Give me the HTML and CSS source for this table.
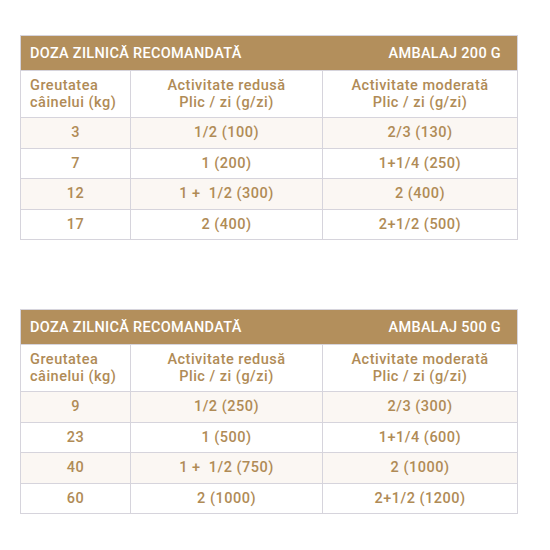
FILE: index.html
```html
<!DOCTYPE html>
<html lang="ro">
<head>
<meta charset="utf-8">
<link rel="stylesheet" href="styles.css">
</head>
<body>
<div class="page">
  <table class="dose">
    <colgroup><col class="c1"><col class="c2"><col class="c3"></colgroup>
    <thead>
      <tr class="title"><th colspan="3"><div class="title-in"><span>DOZA ZILNICĂ RECOMANDATĂ</span><span>AMBALAJ 200 G</span></div></th></tr>
      <tr class="heads"><th class="first">Greutatea<br>câinelui (kg)</th><th>Activitate redusă<br>Plic / zi (g/zi)</th><th>Activitate moderată<br>Plic / zi (g/zi)</th></tr>
    </thead>
    <tbody>
      <tr class="alt"><td>3</td><td>1/2 (100)</td><td>2/3 (130)</td></tr>
      <tr><td>7</td><td>1 (200)</td><td>1+1/4 (250)</td></tr>
      <tr class="alt"><td>12</td><td>1 +&nbsp; 1/2 (300)</td><td>2 (400)</td></tr>
      <tr><td>17</td><td>2 (400)</td><td>2+1/2 (500)</td></tr>
    </tbody>
  </table>
  <table class="dose">
    <colgroup><col class="c1"><col class="c2"><col class="c3"></colgroup>
    <thead>
      <tr class="title"><th colspan="3"><div class="title-in"><span>DOZA ZILNICĂ RECOMANDATĂ</span><span>AMBALAJ 500 G</span></div></th></tr>
      <tr class="heads"><th class="first">Greutatea<br>câinelui (kg)</th><th>Activitate redusă<br>Plic / zi (g/zi)</th><th>Activitate moderată<br>Plic / zi (g/zi)</th></tr>
    </thead>
    <tbody>
      <tr class="alt"><td>9</td><td>1/2 (250)</td><td>2/3 (300)</td></tr>
      <tr><td>23</td><td>1 (500)</td><td>1+1/4 (600)</td></tr>
      <tr class="alt"><td>40</td><td>1 +&nbsp; 1/2 (750)</td><td>2 (1000)</td></tr>
      <tr><td>60</td><td>2 (1000)</td><td>2+1/2 (1200)</td></tr>
    </tbody>
  </table>
</div>
</body>
</html>
```
FILE: styles.css
```css
html, body { margin: 0; padding: 0; background: #fff; }
body { font-family: Roboto, "Open Sans", sans-serif; color: #b08b56; }
.page { padding: 35px 0 0 20px; display: flex; flex-direction: column; gap: 69px; }
.dose { width: 497px; border-collapse: collapse; table-layout: fixed; font-size: 14.5px; font-weight: 500; letter-spacing: 0.5px; }
.c1 { width: 110px; }
.c2 { width: 192px; }
.c3 { width: 195px; }
.dose th, .dose td { border: 1px solid #d6d4dc; padding: 0; }
.title th { background: #b38f5c; color: #fff; height: 34px; font-weight: 500; font-size: 14.5px; }
.title-in { display: flex; justify-content: space-between; padding: 0 16px 0 9px; letter-spacing: 0.3px; }
.heads th { height: 46px; font-weight: 500; line-height: 17px; text-align: center; vertical-align: middle; }
.heads th.first { text-align: left; padding-left: 9px; }
tbody td { height: 29.5px; text-align: center; }
tbody tr.alt td { background: #fbf7f3; }
```
